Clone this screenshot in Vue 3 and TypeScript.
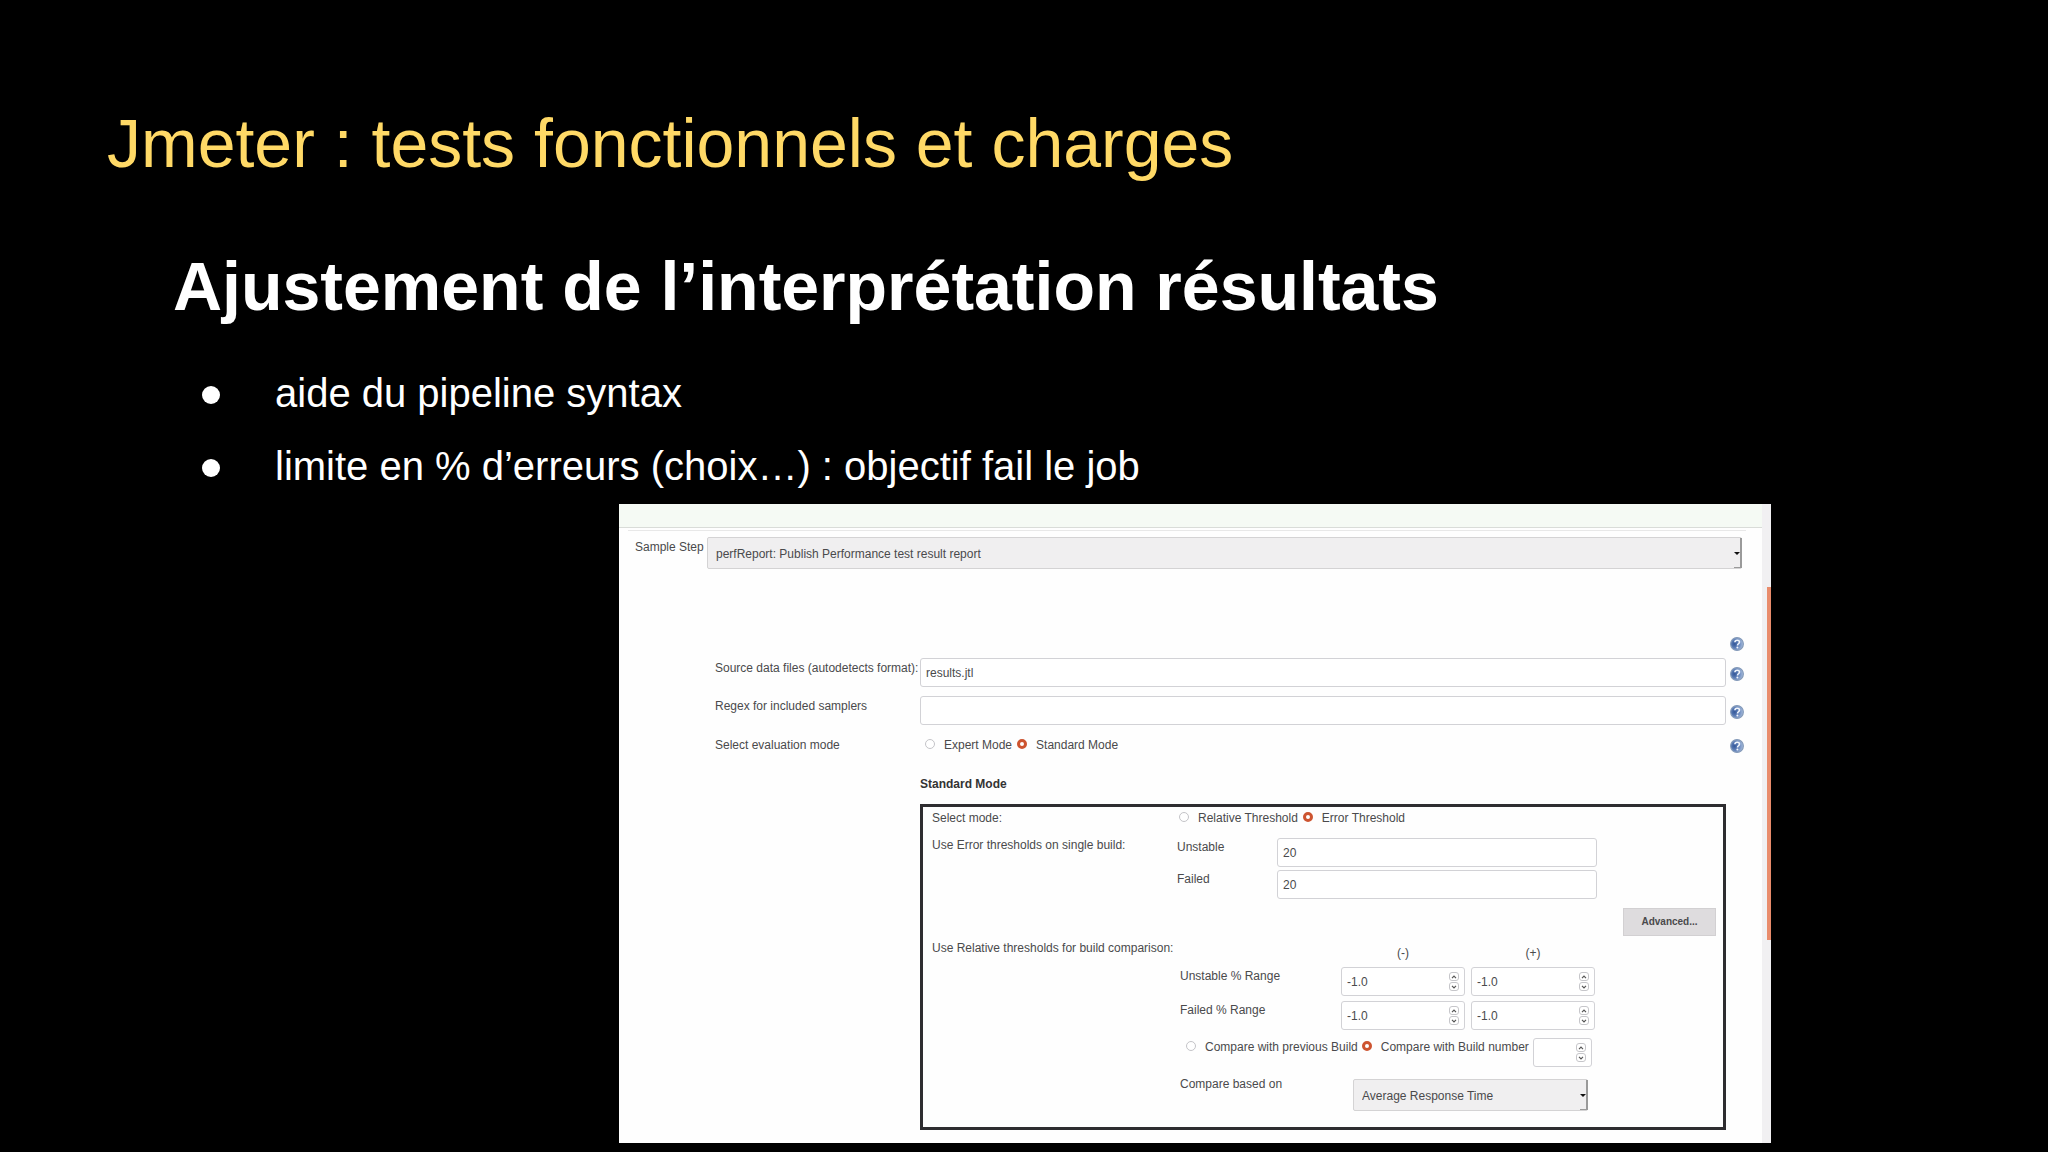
<script setup lang="ts">
import { ref } from 'vue'

interface RangeRow {
  id: string
  label: string
  minus: string
  plus: string
}

const points: string[] = [
  'aide du pipeline syntax',
  'limite en % d’erreurs (choix…) : objectif fail le job',
]

const step = ref('perfReport')
const source = ref('results.jtl')
const regex = ref('')
const evaluation = ref('standard')
const mode = ref('error')
const unstable = ref('20')
const failed = ref('20')
const compareWith = ref('number')
const basedOn = ref('average')

const ranges: RangeRow[] = [
  { id: 'unstable-range', label: 'Unstable % Range', minus: '-1.0', plus: '-1.0' },
  { id: 'failed-range', label: 'Failed % Range', minus: '-1.0', plus: '-1.0' },
]
</script>

<template>
  <main class="slide">
    <svg class="defs" aria-hidden="true">
      <defs>
        <radialGradient id="help-fill" cx="0.3" cy="0.5" r="0.7">
          <stop offset="0" stop-color="#34589a" />
          <stop offset="0.5" stop-color="#6484bb" />
          <stop offset="1" stop-color="#a9bedd" />
        </radialGradient>
        <symbol id="help-icon" viewBox="0 0 14 14">
          <circle cx="7" cy="7" r="6.4" fill="url(#help-fill)" stroke="#8399b8" stroke-width="1.1" />
          <path d="M4.9 5.3C5 3.8 6 3.2 7.200 3.200c1.400 0 2.300.8 2.300 1.900 0 1.600-2 1.700-2 3.300" fill="none" stroke="#f2f6fc" stroke-width="1.600" />
          <circle cx="7.400" cy="10.500" r="1" fill="#f2f6fc" />
        </symbol>
        <symbol id="up-icon" viewBox="0 0 6 4">
          <path d="M1 3.200 3 1.200 5 3.200" fill="none" stroke="#555" stroke-width="1.200" />
        </symbol>
        <symbol id="down-icon" viewBox="0 0 6 4">
          <path d="M1 .8 3 2.800 5 .8" fill="none" stroke="#555" stroke-width="1.200" />
        </symbol>
      </defs>
    </svg>

    <h1 class="title">Jmeter : tests fonctionnels et charges</h1>
    <h2 class="subtitle">Ajustement de l’interprétation résultats</h2>
    <ul class="points">
      <li v-for="point in points" :key="point">{{ point }}</li>
    </ul>

    <section class="panel">
      <form class="content" @submit.prevent>
        <div class="band"></div>
        <div class="rule"></div>

        <div class="step">
          <label for="step">Sample Step</label>
          <span class="select">
            <select id="step" v-model="step">
              <option value="perfReport">perfReport: Publish Performance test result report</option>
            </select>
          </span>
        </div>

        <div class="fields">
          <div class="help-row">
            <svg class="help"><use href="#help-icon" /></svg>
          </div>
          <div class="field">
            <label for="source">Source data files (autodetects format):</label>
            <input id="source" v-model="source" class="text" type="text" />
            <svg class="help"><use href="#help-icon" /></svg>
          </div>
          <div class="field">
            <label for="regex">Regex for included samplers</label>
            <input id="regex" v-model="regex" class="text" type="text" />
            <svg class="help"><use href="#help-icon" /></svg>
          </div>
          <div class="field evaluation">
            <span>Select evaluation mode</span>
            <div class="radios">
              <label><input v-model="evaluation" type="radio" name="evaluation" value="expert" />Expert Mode</label>
              <label><input v-model="evaluation" type="radio" name="evaluation" value="standard" />Standard Mode</label>
            </div>
            <svg class="help"><use href="#help-icon" /></svg>
          </div>

          <div class="standard">
            <h3>Standard Mode</h3>
            <div class="box">
              <div class="line mode">
                <span>Select mode:</span>
                <div class="radios">
                  <label><input v-model="mode" type="radio" name="mode" value="relative" />Relative Threshold</label>
                  <label><input v-model="mode" type="radio" name="mode" value="error" />Error Threshold</label>
                </div>
              </div>

              <div class="line errors">
                <span>Use Error thresholds on single build:</span>
                <div class="thresholds">
                  <label for="unstable">Unstable</label>
                  <input id="unstable" v-model="unstable" class="text" type="text" />
                  <label for="failed">Failed</label>
                  <input id="failed" v-model="failed" class="text" type="text" />
                </div>
              </div>

              <button class="advanced" type="button">Advanced...</button>

              <div class="line relative">
                <span>Use Relative thresholds for build comparison:</span>
                <div class="comparison">
                  <div class="range signs">
                    <span></span>
                    <span>(-)</span>
                    <span>(+)</span>
                  </div>
                  <div v-for="row in ranges" :key="row.id" class="range">
                    <label :for="row.id">{{ row.label }}</label>
                    <span v-for="side in (['minus', 'plus'] as const)" :key="side" class="number">
                      <input :id="side === 'minus' ? row.id : row.id + '-plus'" type="number" step="0.1" :value="row[side]" :aria-label="row.label" />
                      <span class="spin">
                        <button type="button" aria-label="+"><svg><use href="#up-icon" /></svg></button>
                        <button type="button" aria-label="-"><svg><use href="#down-icon" /></svg></button>
                      </span>
                    </span>
                  </div>
                  <div class="radios compare">
                    <label><input v-model="compareWith" type="radio" name="compare" value="previous" />Compare with previous Build</label>
                    <label><input v-model="compareWith" type="radio" name="compare" value="number" />Compare with Build number</label>
                    <span class="number">
                      <input type="number" aria-label="Build number" />
                      <span class="spin">
                        <button type="button" aria-label="+"><svg><use href="#up-icon" /></svg></button>
                        <button type="button" aria-label="-"><svg><use href="#down-icon" /></svg></button>
                      </span>
                    </span>
                  </div>
                  <div class="based">
                    <label for="based">Compare based on</label>
                    <span class="select">
                      <select id="based" v-model="basedOn">
                        <option value="average">Average Response Time</option>
                      </select>
                    </span>
                  </div>
                </div>
              </div>
            </div>
          </div>
        </div>
      </form>
      <div class="scrollbar"><div class="thumb"></div></div>
    </section>
  </main>
</template>

<style>
body {
  background: #000;
}
</style>

<style scoped>
.slide {
  box-sizing: border-box;
  min-height: 100vh;
  padding: 103px 277px 8px 107px;
  background: #000;
  color: #fff;
  font-family: "Liberation Sans", Arial, sans-serif;
}
.defs {
  position: absolute;
  width: 0;
  height: 0;
}
h1, h2, h3, ul {
  margin: 0;
  padding: 0;
}
.title {
  color: #ffd966;
  font-size: 68px;
  font-weight: 400;
  line-height: 80px;
}
.subtitle {
  margin: 63px 0 31px 66px;
  font-size: 68px;
  line-height: 80px;
}
.points {
  padding-left: 95px;
  list-style: none;
}
.points li {
  display: flex;
  align-items: center;
  gap: 55px;
  font-size: 40px;
  line-height: 73px;
}
.points li::before {
  content: "";
  width: 18px;
  height: 18px;
  margin-top: 3px;
  border-radius: 50%;
  background: #fff;
}

.panel {
  display: flex;
  margin: 1px 0 0 512px;
  background: #fefefe;
  color: #4a4a4c;
  font-size: 12px;
  line-height: 16px;
}
.content {
  flex: 1;
  min-width: 0;
  padding-bottom: 13px;
}
.band {
  height: 23px;
  border-bottom: 1px solid #d9dcd8;
  background: #f5faf4;
}
.rule {
  height: 1px;
  margin: 2px 16px 0 9px;
  background: #e8e8e8;
}
.step {
  display: grid;
  grid-template-columns: 72px 1fr;
  margin: 6px 20px 0 16px;
}
.step label {
  padding-top: 2px;
  white-space: nowrap;
}
.select {
  position: relative;
  display: block;
  height: 32px;
}
.select select {
  box-sizing: border-box;
  width: 100%;
  height: 100%;
  padding: 1px 8px 0;
  border: 1px solid #d4d3d4;
  border-radius: 2px;
  background: #f0eff0;
  color: inherit;
  font: inherit;
  appearance: none;
}
.select::before {
  content: "";
  position: absolute;
  right: 0;
  bottom: 1px;
  width: 8px;
  height: 30px;
  box-sizing: border-box;
  border-right: 2px solid #9a9a9a;
  border-bottom: 1px solid #9a9a9a;
  pointer-events: none;
}
.select::after {
  content: "";
  position: absolute;
  right: 2px;
  top: 15px;
  border: 3px solid transparent;
  border-top-color: #111;
  border-bottom-width: 0;
  pointer-events: none;
}

.fields {
  margin: 68px 18px 0 96px;
}
.help-row {
  display: flex;
  justify-content: flex-end;
  height: 21px;
}
.help {
  width: 14px;
  height: 14px;
}
.field {
  display: grid;
  grid-template-columns: 205px 1fr 14px;
  margin-bottom: 9px;
  white-space: nowrap;
}
.field > label {
  padding-top: 2px;
}
.field > .text {
  margin-right: 4px;
}
.field > .help {
  margin-top: 9px;
}
.text {
  box-sizing: border-box;
  width: auto;
  min-width: 0;
  height: 29px;
  padding: 1px 5px 0;
  border: 1px solid #d2d2d6;
  border-radius: 3px;
  background: #fff;
  color: inherit;
  font: inherit;
}
.evaluation {
  align-items: center;
  height: 20px;
  margin: 10px 0 21px;
}
.evaluation > .help {
  margin-top: 1px;
}
.radios {
  display: flex;
  align-items: center;
  gap: 5px;
  padding-left: 5px;
  white-space: nowrap;
}
.radios label {
  display: flex;
  align-items: center;
  gap: 9px;
}
.radios input[type="radio"] {
  appearance: none;
  box-sizing: border-box;
  width: 10px;
  height: 10px;
  margin: 0 0 2px;
  border: 1px solid #c4c4c8;
  border-radius: 50%;
  background: #fff;
}
.radios input[type="radio"]:checked {
  border: 3px solid #cd5430;
}

.standard {
  margin: 0 18px 0 205px;
}
.standard h3 {
  color: #333;
  font-size: 12px;
  line-height: 16px;
}
.box {
  display: flex;
  flex-direction: column;
  margin-top: 12px;
  padding: 0 7px 16px 9px;
  border: 3px solid #2e2d30;
}
.line {
  display: grid;
  grid-template-columns: 245px 1fr;
  white-space: nowrap;
}
.mode {
  align-items: center;
  height: 22px;
}
.mode .radios {
  padding-left: 2px;
}
.errors {
  margin-top: 8px;
}
.thresholds {
  display: grid;
  grid-template-columns: 100px 320px;
  row-gap: 3px;
  padding-top: 1px;
}
.thresholds label {
  padding-top: 1px;
}
.advanced {
  align-self: flex-end;
  width: 93px;
  height: 28px;
  margin-top: 9px;
  padding: 0;
  border: 1px solid #d2d0d2;
  background: #dedcde;
  color: #4a4a4c;
  font: bold 10px/16px "Liberation Sans", Arial, sans-serif;
}
.relative {
  margin-top: 4px;
}
.comparison {
  padding: 5px 0 0 3px;
}
.range {
  display: grid;
  grid-template-columns: 155px 124px 124px;
  column-gap: 6px;
  margin-bottom: 5px;
}
.range label {
  padding-top: 1px;
}
.signs {
  justify-items: center;
  padding-bottom: 1px;
}
.number {
  display: flex;
  align-items: center;
  box-sizing: border-box;
  height: 29px;
  padding: 0 5px;
  border: 1px solid #d2d2d6;
  border-radius: 3px;
  background: #fff;
}
.number input {
  flex: 1;
  width: 0;
  min-width: 0;
  height: 26px;
  padding: 1px 0 0;
  border: 0;
  outline: 0;
  background: transparent;
  color: inherit;
  font: inherit;
  appearance: textfield;
}
.number input::-webkit-inner-spin-button {
  display: none;
}
.spin {
  display: flex;
  flex-direction: column;
  gap: 1px;
}
.spin button {
  display: flex;
  align-items: center;
  justify-content: center;
  box-sizing: border-box;
  width: 10px;
  height: 9px;
  padding: 0;
  border: 1px solid #c6c6ca;
  border-radius: 3px;
  background: #fff;
}
.spin svg {
  width: 6px;
  height: 4px;
}
.compare {
  align-items: flex-start;
  gap: 4px;
  margin-top: 8px;
  padding-left: 6px;
}
.compare label {
  padding-top: 1px;
}
.compare .number {
  width: 59px;
}
.based {
  display: grid;
  grid-template-columns: 173px 235px;
  margin-top: 9px;
}
.based .select {
  margin-top: 3px;
}

.scrollbar {
  width: 9px;
  padding-top: 83px;
  background: #f1f0f2;
  box-sizing: border-box;
}
.thumb {
  height: 353px;
  margin-left: 5px;
  background: #e98c6c;
}
</style>
